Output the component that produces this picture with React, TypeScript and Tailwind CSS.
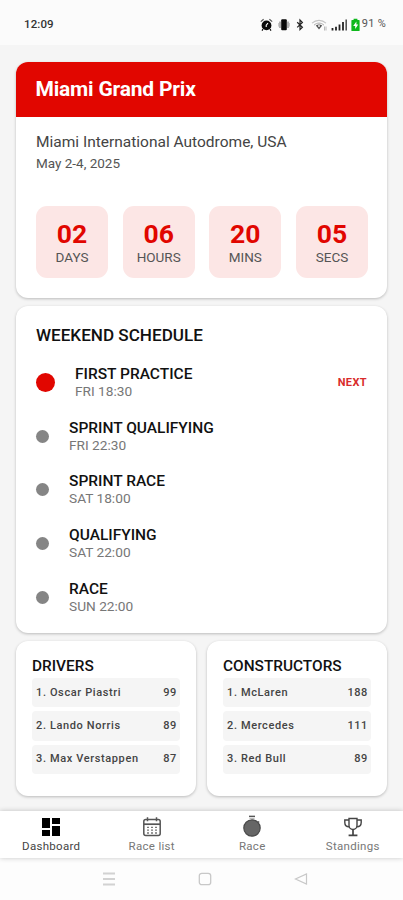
import React from 'react';

interface Session {
  name: string;
  time: string;
  next?: boolean;
}

interface Standing {
  name: string;
  points: number;
}

const countdown = [
  { value: '02', label: 'DAYS' },
  { value: '06', label: 'HOURS' },
  { value: '20', label: 'MINS' },
  { value: '05', label: 'SECS' },
];

const sessions: Session[] = [
  { name: 'FIRST PRACTICE', time: 'FRI 18:30', next: true },
  { name: 'SPRINT QUALIFYING', time: 'FRI 22:30' },
  { name: 'SPRINT RACE', time: 'SAT 18:00' },
  { name: 'QUALIFYING', time: 'SAT 22:00' },
  { name: 'RACE', time: 'SUN 22:00' },
];

const drivers: Standing[] = [
  { name: 'Oscar Piastri', points: 99 },
  { name: 'Lando Norris', points: 89 },
  { name: 'Max Verstappen', points: 87 },
];

const constructors: Standing[] = [
  { name: 'McLaren', points: 188 },
  { name: 'Mercedes', points: 111 },
  { name: 'Red Bull', points: 89 },
];

const StatusBar: React.FC = () => (
  <div className="flex h-[45px] items-center justify-between bg-[#fbfbfb] pt-1 pl-6 pr-[17px] text-[#333]">
    <span className="text-[11.5px] font-medium tracking-[0.1px]">12:09</span>
    <div className="flex items-center">
      {/* Alarm */}
      <svg width="13" height="14" viewBox="0 0 13 14" className="mr-[5px]">
        <path d="M.8 3.6 3.6 1.2M12.2 3.6 9.4 1.2" stroke="#555" strokeWidth="1.2" />
        <circle cx="6.5" cy="7.4" r="4.9" fill="#0a0a0a" />
        <path d="M3 11.2 2 12.6M10 11.2l1 1.4" stroke="#0a0a0a" strokeWidth="1.2" />
        <path d="M8 5.2 6.2 7.2v1.8" stroke="#fff" strokeWidth="1.1" fill="none" />
      </svg>
      {/* Vibrate */}
      <svg width="12" height="14" viewBox="0 0 12 14" className="mr-[6px]">
        <rect x="3.2" y="1.2" width="5.6" height="11" rx="1" fill="#0a0a0a" />
        <path d="M2 3.6v6.4M10 3.6v6.4" stroke="#777" strokeWidth="1.1" />
        <path d="M.6 5v3.6M11.4 5v3.6" stroke="#bbb" strokeWidth=".9" />
      </svg>
      {/* Bluetooth */}
      <svg width="8" height="14" viewBox="0 0 8 14" className="mr-[7px]">
        <path d="M1.2 4.2 6.4 9.2 4 11.6V2l2.4 2.4L1.2 9.4" stroke="#222" strokeWidth="1.2" fill="none" />
      </svg>
      {/* Wifi */}
      <svg width="17" height="14" viewBox="0 0 17 14" className="mr-[3px]">
        <path d="M1 5.2C5 1.4 11 1.4 15 5.2" stroke="#c4c4c4" strokeWidth="1.1" fill="none" />
        <path d="M3 7.2c3-2.8 7-2.8 10 0" stroke="#aaa" strokeWidth="1" fill="none" />
        <path d="M4.8 7.6c2-1.6 4.4-1.6 6.4 0L8 11.6z" fill="#555" />
        <circle cx="8" cy="8" r="1" fill="#eee" />
        <path d="M13.5 8.5v4M15 8.5v4" stroke="#aaa" strokeWidth=".8" />
      </svg>
      {/* Signal */}
      <svg width="17" height="14" viewBox="0 0 17 14" className="mr-[3px]">
        <path d="M1.5 10v2.4M5 8.8v3.6M8.5 6.5v5.9M12 4v8.400" stroke="#222" strokeWidth="1.8" />
        <path d="M15.2 1.6v10.8" stroke="#555" strokeWidth="1.6" />
      </svg>
      {/* Battery */}
      <svg width="9" height="14" viewBox="0 0 9 14" className="mr-[2px]">
        <path d="M2.600.8h3.8v1.200H8a.6.6 0 0 1 .6.6v9.8a.6.6 0 0 1-.6.6H1a.6.6 0 0 1-.6-.6V2.6A.6.6 0 0 1 1 2h1.600z" fill="#0eb81c" />
        <path d="M5.4 3.6 2.2 8h2v3l3-4.400h-1.800z" fill="#fff" />
      </svg>
      <span className="text-[11px] tracking-[0.25px] text-[#555]">91 %</span>
    </div>
  </div>
);

const Card: React.FC<{ className?: string; children: React.ReactNode }> = ({ className = '', children }) => (
  <div className={`overflow-hidden rounded-[12px] bg-white shadow-[0_1px_3px_rgba(0,0,0,0.24)] ${className}`}>
    {children}
  </div>
);

const StandingsCard: React.FC<{ title: string; rows: Standing[] }> = ({ title, rows }) => (
  <Card className="h-[155px] flex-1 px-4 pt-[16px]">
    <h3 className="text-[15.4px] leading-[18px] font-medium text-[#111]">{title}</h3>
    <div className="mt-[3px] flex flex-col gap-[4px]">
      {rows.map((row, index) => (
        <div
          key={row.name}
          className="flex h-[29.3px] items-center justify-between rounded-[4px] bg-[#f5f5f5] px-1 pt-px text-[11px] font-medium tracking-[0.62px] text-[#444]"
        >
          <span>{index + 1}. {row.name}</span>
          <span className="-mr-px">{row.points}</span>
        </div>
      ))}
    </div>
  </Card>
);

const DashboardIcon = () => (
  <svg width="24" height="24" viewBox="0 0 24 24" fill="#000">
    <path d="M3 13h8V3H3v10zm0 8h8v-6H3v6zm10 0h8V11h-8v10zm0-18v6h8V3h-8z" />
  </svg>
);

const CalendarIcon = () => (
  <svg width="24" height="24" viewBox="0 0 24 24" fill="none" stroke="#555">
    <rect x="3.8" y="4.6" width="16.4" height="16" rx="2" strokeWidth="1.5" />
    <path d="M4 9.2h16" strokeWidth="1.7" />
    <path d="M7.5 2.2v4M16.5 2.2v4" strokeWidth="1.5" />
    <path d="M7 12.4h10M7 15.2h10M7 18h10" strokeWidth="1.3" strokeDasharray="2 2" stroke="#777" />
  </svg>
);

const StopwatchIcon = () => (
  <svg width="24" height="24" viewBox="0 0 24 24">
    <path d="M9 1.4h6" stroke="#555" strokeWidth="1.5" />
    <path d="M9.500 3.500h5" stroke="#bbb" strokeWidth="1" />
    <circle cx="12" cy="13" r="8.2" fill="#666" stroke="#4a4a4a" strokeWidth="1.200" />
    <path d="m18 6.400 1.200 1.200" stroke="#555" strokeWidth="1.400" />
  </svg>
);

const TrophyIcon = () => (
  <svg width="24" height="24" viewBox="0 0 24 24" fill="none" stroke="#444" strokeWidth="1.4">
    <path d="M8 3.500h8v7a4 4 0 0 1-8 0z" />
    <path d="M8 5H3.800v2.500c0 2.500 1.700 4.200 4.400 4.400M16 5h4.200v2.500c0 2.500-1.700 4.200-4.400 4.400" />
    <path d="M12 15v5M7.600 20.300h8.800" strokeWidth="1.700" />
  </svg>
);

const tabs = [
  { label: 'Dashboard', icon: <DashboardIcon />, active: true },
  { label: 'Race list', icon: <CalendarIcon /> },
  { label: 'Race', icon: <StopwatchIcon /> },
  { label: 'Standings', icon: <TrophyIcon /> },
];

const App: React.FC = () => {
  return (
    <div className="flex h-[900px] w-[403px] flex-col overflow-hidden bg-[#f5f5f5] font-['Roboto',sans-serif]">
      <StatusBar />

      <main className="flex flex-1 flex-col gap-2 px-4 pt-[17px]">
        {/* Next race */}
        <Card className="h-[236px] shrink-0">
          <div className="flex h-[55px] items-center bg-[#e10600] px-[19.5px] pt-px">
            <h1 className="text-[21px] font-bold tracking-[-0.2px] text-white">Miami Grand Prix</h1>
          </div>
          <div className="px-5 pt-[15px]">
            <p className="text-[15.5px] leading-[20px] text-[#444]">Miami International Autodrome, USA</p>
            <p className="mt-[1px] text-[13.5px] leading-[20px] text-[#555]">May 2-4, 2025</p>
            <div className="mt-[33px] -mr-px flex justify-between">
              {countdown.map((item) => (
                <div
                  key={item.label}
                  className="flex h-[72px] w-[72px] flex-col items-center rounded-[11px] bg-[#fce6e5] pt-[13px]"
                >
                  <span className="text-[26.5px] leading-[30px] font-bold text-[#e10600]">{item.value}</span>
                  <span className="text-[13.5px] leading-[17px] text-[#555]">{item.label}</span>
                </div>
              ))}
            </div>
          </div>
        </Card>

        {/* Weekend schedule */}
        <Card className="h-[327px] shrink-0 px-5 pt-[18px]">
          <h2 className="text-[17.1px] leading-[22px] font-medium text-[#111]">WEEKEND SCHEDULE</h2>
          <div className="mt-[10px]">
            {sessions.map((session) => (
              <div key={session.name} className="flex h-[53.6px] items-center">
                {session.next ? (
                  <div className="h-[19px] w-[19px] rounded-full bg-[#e10600]" />
                ) : (
                  <div className="h-[13px] w-[13px] rounded-full bg-[#858585]" />
                )}
                <div className="ml-5 flex-1">
                  <p className="text-[15.5px] leading-[18px] font-medium text-[#111]">{session.name}</p>
                  <p className="text-[13.7px] leading-[17px] text-[#777]">{session.time}</p>
                </div>
                {session.next && (
                  <span className="text-[11px] font-bold tracking-[0.4px] text-[#d92b2b]">NEXT</span>
                )}
              </div>
            ))}
          </div>
        </Card>

        {/* Standings */}
        <div className="flex gap-[11px]">
          <StandingsCard title="DRIVERS" rows={drivers} />
          <StandingsCard title="CONSTRUCTORS" rows={constructors} />
        </div>
      </main>

      <nav className="z-10 flex h-[47px] shrink-0 bg-white pl-px shadow-[0_0_5px_rgba(0,0,0,0.22)]">
        {tabs.map((tab) => (
          <div key={tab.label} className="flex flex-1 flex-col items-center pt-[4px]">
            {tab.icon}
            <span
              className={`text-[11.5px] leading-[14px] tracking-[0.3px] ${
                tab.active ? 'text-[#444]' : 'text-[#777]'
              }`}
            >
              {tab.label}
            </span>
          </div>
        ))}
      </nav>

      {/* System navigation */}
      <div className="flex h-[42px] shrink-0 items-center justify-center gap-[82px] bg-[#fdfdfd] pl-[6px]">
        <svg width="14" height="14" viewBox="0 0 14 14" stroke="#d2d2d2" strokeWidth="1.8">
          <path d="M1 1.5h12M1 7h12M1 12.5h12" />
        </svg>
        <svg width="14" height="14" viewBox="0 0 14 14" fill="none" stroke="#c8c8c8" strokeWidth="1.3">
          <rect x="1.3" y="1.300" width="11.400" height="11.400" rx="2.500" />
        </svg>
        <svg width="14" height="14" viewBox="0 0 14 14" fill="none" stroke="#c8c8c8" strokeWidth="1.2">
          <path d="M12.500 2v10L1.500 7z" />
        </svg>
      </div>
    </div>
  );
};

export default App;
